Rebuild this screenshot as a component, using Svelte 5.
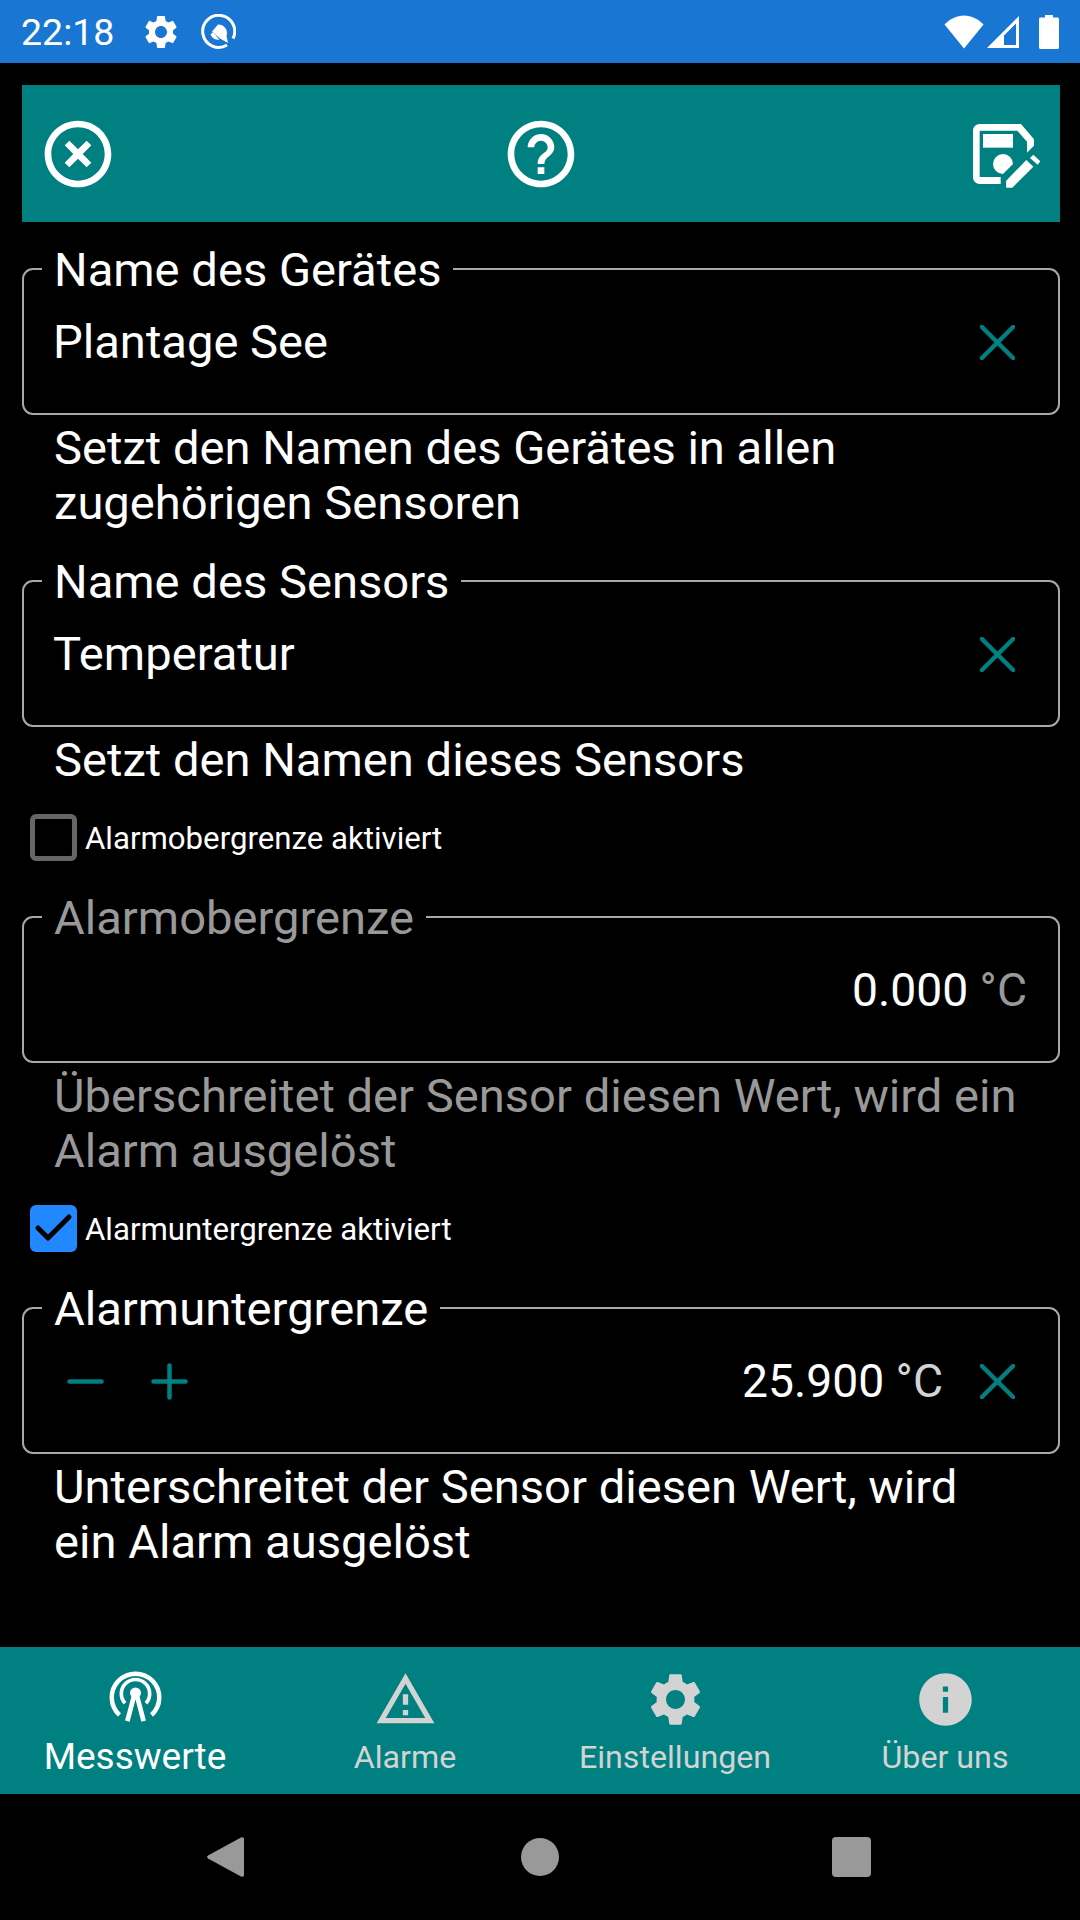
<script>
	const gear =
		'M19.14 12.94c.04-.3.06-.61.06-.94 0-.32-.02-.64-.07-.94l2.03-1.58c.18-.14.23-.41.12-.61l-1.92-3.32c-.12-.22-.37-.29-.59-.22l-2.39.96c-.5-.38-1.03-.7-1.62-.94l-.36-2.54c-.04-.24-.24-.41-.48-.41h-3.84c-.24 0-.43.17-.47.41l-.36 2.54c-.59.24-1.13.57-1.62.94l-2.39-.96c-.22-.08-.47 0-.59.22L2.74 8.87c-.12.21-.08.47.12.61l2.03 1.58c-.05.3-.09.63-.09.94s.02.64.07.94l-2.03 1.58c-.18.14-.23.41-.12.61l1.92 3.32c.12.22.37.29.59.22l2.39-.96c.5.38 1.03.7 1.62.94l.36 2.54c.05.24.24.41.48.41h3.84c.24 0 .44-.17.47-.41l.36-2.54c.59-.24 1.13-.56 1.62-.94l2.39.96c.22.08.47 0 .59-.22l1.92-3.32c.12-.22.07-.47-.12-.61l-2.01-1.58zM12 15.6c-1.98 0-3.6-1.62-3.6-3.6s1.62-3.6 3.6-3.6 3.6 1.62 3.6 3.6-1.62 3.6-3.6 3.6z';

	const tabs = [
		{ label: 'Messwerte', active: true },
		{ label: 'Alarme' },
		{ label: 'Einstellungen' },
		{ label: 'Über uns' }
	];
</script>

<div class="screen">
	<header class="status">
		<span class="time">22:18</span>
		<svg class="st-gear" viewBox="0 0 24 24"><path d={gear} fill="#fff" /></svg>
		<svg class="st-q" viewBox="0 0 36 36">
			<path d="M27 31A16 16 0 1 1 33 24.5" fill="none" stroke="#fff" stroke-width="3" />
			<path d="M12 17.5L18 10.5A8.6 8.6 0 0 1 26.5 22L28 29L20 24.5Z" fill="#fff" />
			<path d="M10.5 20.5L13 18L19.5 25.8A9 9 0 0 1 10.5 20.5Z" fill="#fff" />
		</svg>
		<span class="spacer"></span>
		<svg class="st-wifi" viewBox="0 0 40 34"><path d="M20 33.5L0.5 9.5C6 4 12.500 0.5 20 0.500S34 4 39.500 9.500Z" fill="#fff" /></svg>
		<svg class="st-signal" viewBox="0 0 32 32">
			<path d="M32 0V32H0ZM29 7.500L17 19.500V29H29Z" fill="#fff" fill-rule="evenodd" />
		</svg>
		<svg class="st-battery" viewBox="0 0 20 34">
			<path d="M6 0H14V2.500H18.500C19.300 2.500 20 3.200 20 4V32.500C20 33.300 19.300 34 18.500 34H1.500C.7 34 0 33.300 0 32.500V4C0 3.200 .7 2.500 1.500 2.500H6Z" fill="#fff" />
		</svg>
	</header>

	<div class="toolbar">
		<svg class="tool-icon" viewBox="0 0 24 24">
			<path d="M14.59 8L12 10.59 9.41 8 8 9.41 10.59 12 8 14.59 9.41 16 12 13.41 14.59 16 16 14.59 13.41 12 16 9.41 14.59 8zM12 2C6.47 2 2 6.47 2 12s4.47 10 10 10 10-4.47 10-10S17.53 2 12 2zm0 18c-4.41 0-8-3.59-8-8s3.59-8 8-8 8 3.59 8 8-3.59 8-8 8z" />
		</svg>
		<svg class="tool-icon" viewBox="0 0 24 24">
			<path d="M11 18h2v-2h-2v2zm1-16C6.48 2 2 6.48 2 12s4.48 10 10 10 10-4.48 10-10S17.52 2 12 2zm0 18c-4.41 0-8-3.59-8-8s3.59-8 8-8 8 3.59 8 8-3.59 8-8 8zm0-14c-2.21 0-4 1.79-4 4h2c0-1.100.9-2 2-2s2 .9 2 2c0 2-3 1.750-3 5h2c0-2.250 3-2.500 3-5 0-2.210-1.790-4-4-4z" />
		</svg>
		<svg class="tool-icon" viewBox="0 0 24 24">
			<path d="M21.300 9.500V7.600L17.400 3H5C3.890 3 3 3.900 3 5v14c0 1.100.89 2 2 2h6.300v-2.100H5V5h11.300L19.200 8.300V11.600z" />
			<path d="M15 15A3 3 0 1 0 12 18Z" />
			<path d="M6 6h9v4.100H6z" />
			<path d="M19 13.800L21.100 15.800L14.800 22.100H12.950V20.060z" />
			<path d="M21.100 12.200L23.200 14.200L22.400 15.200L20.100 13.200z" />
		</svg>
	</div>

	<fieldset class="field">
		<legend>Name des Gerätes</legend>
		<div class="row">
			<span class="value left">Plantage See</span>
			<svg class="clear" viewBox="0 0 36 36"><path d="M2 2L34 34M34 2L2 34" /></svg>
		</div>
	</fieldset>
	<p class="help">Setzt den Namen des Gerätes in allen<br />zugehörigen Sensoren</p>

	<fieldset class="field">
		<legend>Name des Sensors</legend>
		<div class="row">
			<span class="value left">Temperatur</span>
			<svg class="clear" viewBox="0 0 36 36"><path d="M2 2L34 34M34 2L2 34" /></svg>
		</div>
	</fieldset>
	<p class="help">Setzt den Namen dieses Sensors</p>

	<div class="check">
		<span class="box"></span>
		<span>Alarmobergrenze aktiviert</span>
	</div>

	<fieldset class="field off">
		<legend>Alarmobergrenze</legend>
		<div class="row end">
			<span class="value num">0.000 <span class="unit">°C</span></span>
		</div>
	</fieldset>
	<p class="help off">Überschreitet der Sensor diesen Wert, wird ein<br />Alarm ausgelöst</p>

	<div class="check">
		<span class="box on">
			<svg viewBox="0 0 47 47"><path d="M8 23L18 33L39 12" /></svg>
		</span>
		<span>Alarmuntergrenze aktiviert</span>
	</div>

	<fieldset class="field">
		<legend>Alarmuntergrenze</legend>
		<div class="row">
			<svg class="step" viewBox="0 0 37 37"><path d="M2.500 18.500H34.500" /></svg>
			<svg class="step" viewBox="0 0 37 37"><path d="M2.500 18.500H34.500M18.500 2.500V34.500" /></svg>
			<span class="value num push">25.900 <span class="unit">°C</span></span>
			<svg class="clear" viewBox="0 0 36 36"><path d="M2 2L34 34M34 2L2 34" /></svg>
		</div>
	</fieldset>
	<p class="help">Unterschreitet der Sensor diesen Wert, wird<br />ein Alarm ausgelöst</p>

	<nav class="tabs">
		{#each tabs as tab, i}
			<div class="tab" class:active={tab.active}>
				<svg viewBox="0 0 24 24">
					{#if i === 0}
						<g fill="none" stroke="#fff">
							<path d="M5.900 17.900A9.050 9.050 0 1 1 18.100 17.900" stroke-width="1.700" />
							<path d="M8 13.400A5.400 5.400 0 1 1 16 13.400" stroke-width="1.400" />
							<path d="M11.600 10L8.900 20.200M12.400 10L15.100 20.200" stroke-width="1.800" />
						</g>
						<circle cx="12" cy="9.500" r="2.100" fill="#fff" />
					{:else if i === 1}
						<path d="M12 5.990L19.530 19H4.470L12 5.990M12 2L1 21h22L12 2zm1 14h-2v2h2v-2zm0-6h-2v4h2v-4z" />
					{:else if i === 2}
						<path d={gear} />
					{:else}
						<path d="M12 2C6.480 2 2 6.480 2 12s4.480 10 10 10 10-4.480 10-10S17.520 2 12 2zm1 15h-2v-6h2v6zm0-8h-2V7h2v2z" />
					{/if}
				</svg>
				<span>{tab.label}</span>
			</div>
		{/each}
	</nav>

	<footer class="nav">
		<svg class="back" viewBox="0 0 38 42">
			<path d="M35 1.500L2 19.500C.8 20.300 .8 21.700 2 22.500L35 40.500C36.500 41.300 38 40.500 38 39V3C38 1.500 36.500 .7 35 1.500Z" fill="#999" />
		</svg>
		<span class="home"></span>
		<span class="recent"></span>
	</footer>
</div>

<style>
	:global(body) {
		background: #000;
	}

	.screen {
		display: flex;
		flex-direction: column;
		height: 1920px;
		background: #000;
		color: #fff;
		font-family: Roboto, sans-serif;
		font-size: 47.15px;
		overflow: hidden;
	}

	.status {
		display: flex;
		align-items: center;
		height: 63px;
		padding: 0 21px;
		background: #1976d2;
		flex: none;
	}

	.time {
		font-size: 37.5px;
		margin-right: 27px;
	}

	.st-gear {
		width: 40px;
		height: 40px;
		margin-right: 19px;
	}

	.st-q {
		width: 36px;
		height: 36px;
	}

	.spacer {
		flex: 1;
	}

	.st-wifi {
		width: 40px;
		height: 34px;
		margin-right: 3px;
	}

	.st-signal {
		width: 32px;
		height: 32px;
		margin-right: 20px;
	}

	.st-battery {
		width: 20px;
		height: 34px;
	}

	.toolbar {
		display: flex;
		align-items: center;
		justify-content: space-between;
		height: 137px;
		margin: 22px 20px 20px 22px;
		padding: 0 17px 0 16px;
		background: #008080;
		flex: none;
	}

	.tool-icon {
		width: 80px;
		height: 80px;
		fill: #fff;
	}

	.field {
		box-sizing: border-box;
		flex: none;
		height: 173px;
		margin: 0 20px 0 22px;
		padding: 0;
		border: 2px solid #a8a8a8;
		border-radius: 11px;
		min-width: 0;
	}

	.field + .help {
		margin-top: 6px;
	}

	legend {
		margin-left: 18px;
		padding: 0 12px;
		height: 54px;
		line-height: 56px;
	}

	.row {
		display: flex;
		align-items: center;
		height: 92px;
		padding: 0 29px;
	}

	.end {
		justify-content: flex-end;
		padding-right: 31px;
	}

	.value.left {
		flex: 1;
	}

	.num {
		font-size: 46.25px;
	}

	.push {
		margin-left: auto;
		margin-right: 37px;
	}

	.unit {
		color: #d3d3d3;
	}

	.clear {
		width: 35px;
		height: 35px;
		margin-right: 14px;
	}

	.clear path,
	.step path {
		fill: none;
		stroke: #008080;
		stroke-width: 4.500;
		stroke-linecap: round;
	}

	.step {
		width: 37px;
		height: 37px;
	}

	.step:first-child {
		margin: 0 47px 0 14px;
	}

	.help {
		margin: 0 0 23px;
		padding-left: 54px;
		line-height: 55px;
		flex: none;
	}

	.off,
	.off legend {
		color: #999;
	}

	.off .value {
		color: #fff;
	}

	.off .unit {
		color: #999;
	}

	.check {
		display: flex;
		align-items: center;
		gap: 8px;
		height: 47px;
		margin: 4px 0 28px 30px;
		font-size: 31.2px;
		flex: none;
	}

	.box {
		box-sizing: border-box;
		width: 47px;
		height: 47px;
		margin-top: -2px;
		border: 5px solid #666;
		border-radius: 6px;
	}

	.box.on {
		border: none;
		background: #2288ff;
	}

	.box svg {
		display: block;
		width: 47px;
		height: 47px;
	}

	.box path {
		fill: none;
		stroke: #000;
		stroke-width: 5;
		stroke-linecap: round;
		stroke-linejoin: round;
	}

	.tabs {
		display: grid;
		grid-template-columns: repeat(4, 1fr);
		height: 147px;
		margin-top: auto;
		background: #008080;
		flex: none;
	}

	.tab {
		display: flex;
		flex-direction: column;
		align-items: center;
		color: #d3d3d3;
		font-size: 32.2px;
		line-height: 36px;
	}

	.tab svg {
		width: 63px;
		height: 63px;
		margin-top: 21px;
		margin-bottom: 8px;
		fill: #d3d3d3;
	}

	.tab.active {
		color: #fff;
		font-size: 37px;
	}

	.nav {
		display: grid;
		grid-template-columns: repeat(3, 1fr);
		justify-items: center;
		align-items: center;
		height: 126px;
		padding: 0 72px;
		flex: none;
	}

	.back {
		width: 38px;
		height: 42px;
		margin-right: 7px;
	}

	.home {
		width: 38px;
		height: 38px;
		border-radius: 50%;
		background: #999;
	}

	.recent {
		width: 39px;
		height: 40px;
		margin-right: 2px;
		border-radius: 4px;
		background: #999;
	}
</style>
